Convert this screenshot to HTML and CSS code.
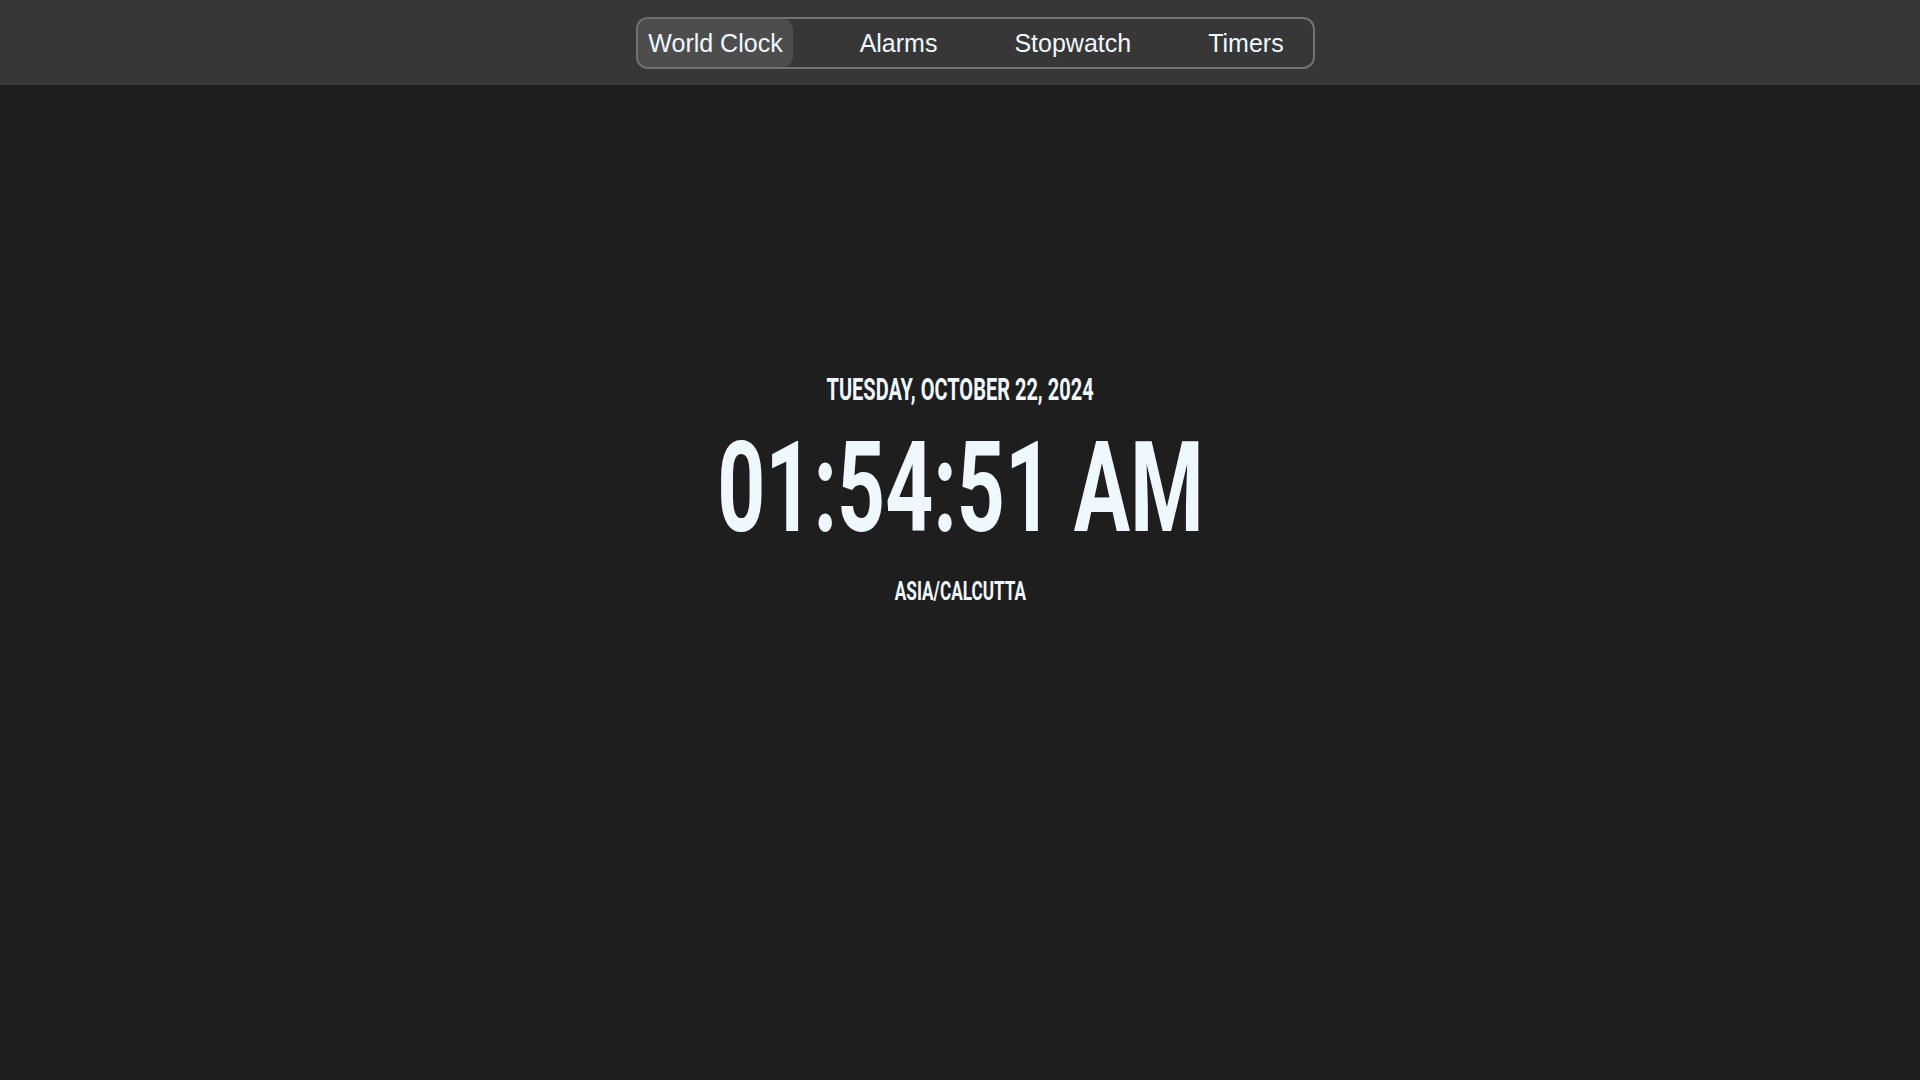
FILE: index.html
```html
<!DOCTYPE html>
<html lang="en">
<head>
<meta charset="utf-8">
<title>World Clock</title>
<link rel="stylesheet" href="styles.css">
</head>
<body>
<header class="topbar">
  <nav class="tabs">
    <a class="tab tab-active">World Clock</a>
    <a class="tab">Alarms</a>
    <a class="tab">Stopwatch</a>
    <a class="tab">Timers</a>
  </nav>
</header>
<main class="clock">
  <div class="date"><span class="squeeze">Tuesday, October 22, 2024</span></div>
  <div class="time"><span class="squeeze">01:54:51 AM</span></div>
  <div class="zone"><span class="squeeze">Asia/Calcutta</span></div>
</main>
</body>
</html>
```

FILE: styles.css
```css
html, body {
  margin: 0;
  padding: 0;
}
body {
  background: #1e1e1e;
  min-height: 100vh;
  font-family: "Liberation Sans", Arial, sans-serif;
}
.topbar {
  height: 85px;
  background: #373737;
  display: flex;
  align-items: center;
  justify-content: center;
  padding-left: 31px;
  box-sizing: border-box;
}
.tabs {
  display: flex;
  gap: 57px;
  border: 2px solid #727272;
  border-radius: 12px;
  padding-right: 19px;
}
.tab {
  font-size: 25px;
  line-height: 28px;
  padding: 10px;
  color: #f0f8ff;
  border-radius: 10px;
  white-space: nowrap;
}
.tab-active {
  background: #4d4d4d;
}
.clock {
  display: flex;
  flex-direction: column;
  align-items: center;
  padding-top: 285px;
  color: #f0f8ff;
  font-family: Roboto, "Liberation Sans", sans-serif;
  font-weight: 700;
  text-transform: uppercase;
}
.squeeze {
  display: inline-block;
  transform: scaleX(0.66);
  transform-origin: center;
  white-space: nowrap;
}
.date {
  font-size: 31px;
  line-height: 40px;
}
.date .squeeze {
  transform: scaleX(0.645);
}
.time {
  font-size: 127px;
  line-height: 130px;
  margin-top: 13px;
}
.zone {
  font-size: 26px;
  line-height: 32px;
  margin-top: 22px;
}
```
